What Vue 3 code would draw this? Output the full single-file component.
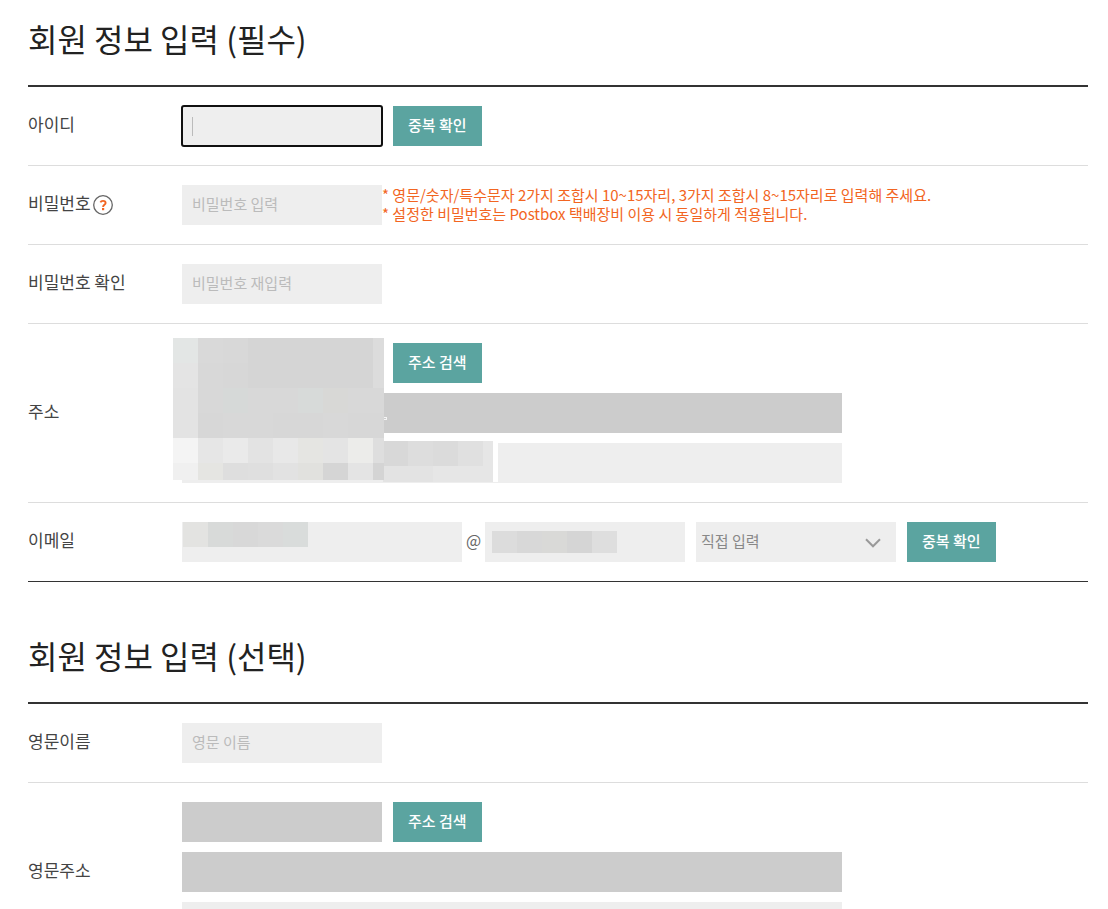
<script setup>
import { ref } from 'vue'

const userId = ref('')
const password = ref('')
const passwordCheck = ref('')
const englishName = ref('')
const domain = ref('직접 입력')

const toCells = (rows) =>
  rows.flatMap((row, r) => row.map((fill, c) => ({ key: `${r}-${c}`, x: c * 25, y: r * 25, fill })))

const addressMask = toCells([
  ['#e3e6e5', '#d9d9d9', '#d8d8d8', '#d5d5d5', '#d5d5d5', '#d5d5d5', '#d5d5d5', '#d5d5d5', '#dcdcdc'],
  ['#e4e4e4', '#d8d8d8', '#d7d7d7', '#d5d5d5', '#d5d5d5', '#d5d5d5', '#d5d5d5', '#d5d5d5', '#dcdcdc'],
  ['#e3e3e3', '#d8d8d8', '#d6d9d8', '#d8d8d8', '#d8d8d8', '#d7dad9', '#d8d8d6', '#d8d8d8', '#d8d8d8'],
  ['#e3e3e3', '#d7d7d7', '#d8d8d8', '#d8d8d8', '#d7d7d7', '#d7d7d7', '#d8d8d8', '#d7d7d7', '#d7d7d7'],
  ['#f4f4f4', '#e6e6e6', '#eaeaea', '#e3e3e3', '#e8e8e8', '#e5e5e2', '#e4e4e4', '#ececea', '#dedede'],
  ['#f0f0f0', '#e5e5e2', '#dedede', '#dfdfdf', '#e2e2e2', '#e1e1de', '#d5d5d5', '#e4e4e4', '#d4d4d4']
])
const detailMask = toCells([
  ['#d8d8d8', '#dddddd', '#dbdbdb', '#e0e0e0', '#e6e6e6'],
  ['#e3e3e3', '#e3e3e3', '#e6e6e6', '#e6e6e6', '#e6e6e6']
])
const emailMask = toCells([['#e3e3e1', '#d8dad9', '#d8d8d8', '#dadada', '#d9dcdb']])
const domainMask = toCells([['#dcdcdc', '#d8d8d8', '#d9d9d7', '#d5d5d5', '#dedede']])
</script>

<template>
  <main class="page">
    <form @submit.prevent>
      <section>
        <h2>회원 정보 입력 (필수)</h2>
        <div class="rows closed">
          <div class="row">
            <label class="name" for="user-id">아이디</label>
            <div class="line">
              <span class="holder">
                <input id="user-id" v-model="userId" class="short active" type="text" />
                <span class="caret"></span>
              </span>
              <button type="button">중복 확인</button>
            </div>
          </div>

          <div class="row">
            <div class="name with-help">
              <label for="password">비밀번호</label>
              <a class="help" href="#password-rule" aria-label="비밀번호 도움말">
                <svg width="22" height="22" viewBox="0 0 22 22" fill="none">
                  <circle cx="11" cy="11" r="9.3" stroke="#666" stroke-width="1.3" />
                  <path d="M8.4 8.3C8.9 7.3 9.8 6.9 11 6.9c1.6 0 2.6.8 2.6 2 0 1.900-2.500 1.900-2.500 4" stroke="#f26522" stroke-width="1.900" />
                  <rect x="10" y="14" width="2.200" height="2.200" fill="#f26522" />
                </svg>
              </a>
            </div>
            <div class="line tight">
              <input id="password" v-model="password" class="short" type="password" placeholder="비밀번호 입력" />
              <p id="password-rule" class="rule">
                * 영문/숫자/특수문자 2가지 조합시 10~15자리, 3가지 조합시 8~15자리로 입력해 주세요.<br />
                * 설정한 비밀번호는 Postbox 택배장비 이용 시 동일하게 적용됩니다.
              </p>
            </div>
          </div>

          <div class="row">
            <label class="name" for="password-check">비밀번호 확인</label>
            <div class="line">
              <input id="password-check" v-model="passwordCheck" class="short" type="password" placeholder="비밀번호 재입력" />
            </div>
          </div>

          <div class="row">
            <label class="name" for="postcode">주소</label>
            <div class="stack">
              <div class="line">
                <input id="postcode" class="short locked" type="text" readonly />
                <button type="button">주소 검색</button>
              </div>
              <input class="long locked" type="text" aria-label="기본 주소" readonly />
              <input class="long" type="text" aria-label="상세 주소" />
              <svg class="mask detail-mask" width="115" height="41" aria-hidden="true">
                <rect width="115" height="41" fill="#fff" />
                <svg width="110" height="41">
                  <rect v-for="c in detailMask" :key="c.key" :x="c.x" :y="c.y" width="25" height="25" :fill="c.fill" />
                </svg>
              </svg>
              <svg class="mask address-mask" width="214" height="142" aria-hidden="true">
                <svg width="211" height="142">
                  <rect v-for="c in addressMask" :key="c.key" :x="c.x" :y="c.y" width="25" height="25" :fill="c.fill" />
                </svg>
                <path d="M211 79h3v3h-3v-1h2v-1h-2z" fill="#f4f4f4" />
              </svg>
            </div>
          </div>

          <div class="row">
            <label class="name" for="email">이메일</label>
            <div class="line">
              <div class="email">
                <span class="holder">
                  <input id="email" class="medium" type="text" />
                  <svg class="mask email-mask" width="125" height="25" aria-hidden="true">
                    <rect v-for="c in emailMask" :key="c.key" :x="c.x" :y="c.y" width="25" height="25" :fill="c.fill" />
                  </svg>
                </span>
                <span class="at">@</span>
                <span class="holder">
                  <input class="short" type="text" aria-label="이메일 도메인" />
                  <svg class="mask domain-mask" width="125" height="22" aria-hidden="true">
                    <rect v-for="c in domainMask" :key="c.key" :x="c.x" :y="c.y" width="25" height="25" :fill="c.fill" />
                  </svg>
                </span>
              </div>
              <span class="holder">
                <select v-model="domain" aria-label="도메인 선택">
                  <option>직접 입력</option>
                </select>
                <svg class="arrow" width="16" height="10" viewBox="0 0 16 10" fill="none" aria-hidden="true">
                  <path d="M1 1.300l7 7 7-7" stroke="#999" stroke-width="2" />
                </svg>
              </span>
              <button type="button">중복 확인</button>
            </div>
          </div>
        </div>
      </section>

      <section class="optional">
        <h2>회원 정보 입력 (선택)</h2>
        <div class="rows">
          <div class="row">
            <label class="name" for="english-name">영문이름</label>
            <div class="line">
              <input id="english-name" v-model="englishName" class="short" type="text" placeholder="영문 이름" />
            </div>
          </div>
          <div class="row">
            <label class="name" for="english-postcode">영문주소</label>
            <div class="stack">
              <div class="line">
                <input id="english-postcode" class="short locked" type="text" readonly />
                <button type="button">주소 검색</button>
              </div>
              <input class="long locked" type="text" aria-label="영문 기본 주소" readonly />
              <input class="long" type="text" aria-label="영문 상세 주소" />
            </div>
          </div>
        </div>
      </section>
    </form>
  </main>
</template>

<style>
body {
  margin: 0;
  background: #fff;
}
</style>

<style scoped>
.page {
  padding: 0 20px 0 28px;
  color: #444;
  font-family: "Noto Sans CJK KR", sans-serif;
  font-size: 17px;
  line-height: 24px;
}

.page * {
  box-sizing: border-box;
}

.optional {
  padding-top: 35px;
}

h2 {
  margin: 0;
  padding: 14px 0 23px;
  color: #222;
  font-size: 32px;
  font-weight: 400;
  line-height: 48px;
}

.rows {
  border-top: 2px solid #333;
}

.row {
  display: grid;
  grid-template-columns: 154px 1fr;
  align-items: center;
  padding: 19px 0;
  border-bottom: 1px solid #ddd;
}

.closed .row:last-child {
  border-bottom-color: #333;
}

.name {
  padding-bottom: 4px;
  white-space: nowrap;
}

.with-help {
  display: flex;
  align-items: center;
  gap: 1px;
}

.help {
  display: flex;
  padding-top: 4px;
}

.line {
  display: flex;
  align-items: center;
  gap: 11px;
}

.line.tight {
  align-items: flex-start;
  gap: 0;
}

.stack {
  position: relative;
  display: flex;
  flex-direction: column;
  gap: 10px;
}

.holder {
  position: relative;
  display: flex;
}

.email {
  display: flex;
  align-items: center;
}

.at {
  width: 23px;
  padding-bottom: 4px;
  color: #666;
  font-size: 16px;
  text-align: center;
}

input,
select,
button {
  height: 40px;
  margin: 0;
  border: 0;
  border-radius: 0;
  font-family: inherit;
  font-size: 15px;
}

input {
  padding: 0 10px 4px;
  background: #eee;
  color: #444;
  outline-offset: -1px;
}

input::placeholder {
  color: #bbb;
  opacity: 1;
}

.short {
  width: 200px;
}

.medium {
  width: 280px;
}

.long {
  width: 100%;
  max-width: 660px;
}

.locked {
  background: #ccc;
}

.active {
  border-radius: 2px;
  outline: 2px solid #101010;
}

.caret {
  position: absolute;
  top: 11px;
  left: 10px;
  width: 1px;
  height: 19px;
  background: #bbb;
}

select {
  width: 200px;
  padding: 0 36px 4px 5px;
  appearance: none;
  background: #eee;
  color: #888;
}

.arrow {
  position: absolute;
  top: 16px;
  right: 15px;
  pointer-events: none;
}

button {
  padding: 0 15px 4px;
  background: #5ba4a0;
  color: #fff;
  font-weight: 500;
  white-space: nowrap;
}

.rule {
  margin: 0;
  color: #f26522;
  font-size: 15px;
  line-height: 19px;
}

.mask {
  position: absolute;
  pointer-events: none;
}

.address-mask {
  top: -5px;
  left: -9px;
}

.detail-mask {
  top: 98px;
  left: 201px;
}

.email-mask {
  top: 0;
  left: 1px;
}

.domain-mask {
  top: 9px;
  left: 7px;
}
</style>
